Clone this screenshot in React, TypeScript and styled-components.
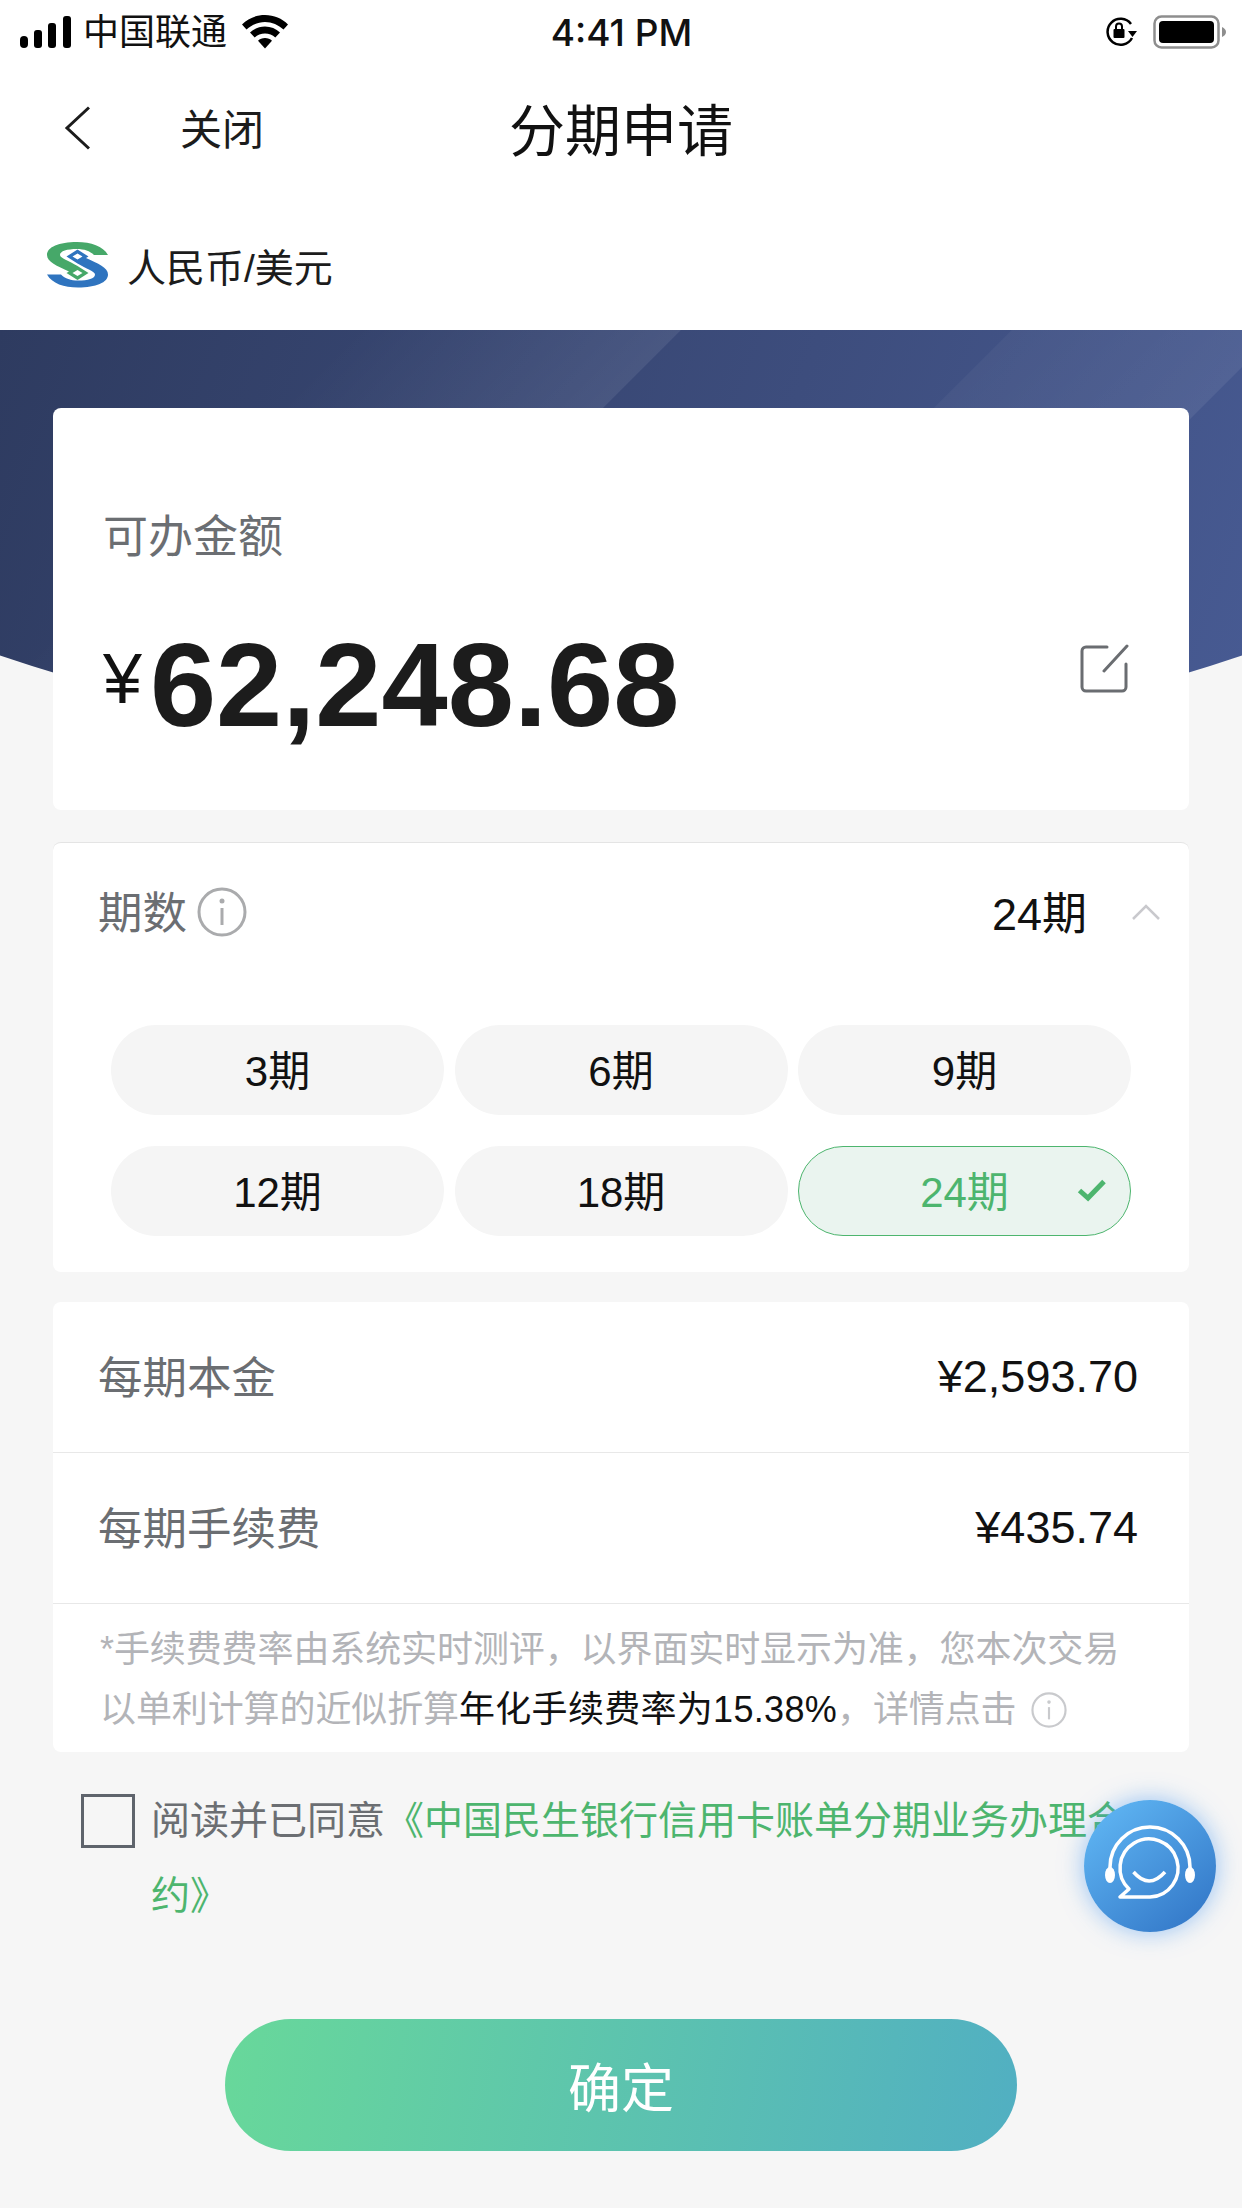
import styled, { createGlobalStyle } from 'styled-components';

const CJK = `"Liberation Sans", "Noto Sans CJK SC", sans-serif`;
const GREEN = '#4db56e';
const PERIODS = ['3期', '6期', '9期', '12期', '18期', '24期'];

const App = () => {
  return (
    <Page>
      <GlobalStyle />
      <StatusBar>
        <StatusLeft>
          <SignalIcon />
          <Carrier>中国联通</Carrier>
          <WifiIcon />
        </StatusLeft>
        <Clock>4:41 PM</Clock>
        <StatusRight>
          <LockIcon />
          <BatteryIcon />
        </StatusRight>
      </StatusBar>

      <NavBar>
        <NavLeft>
          <BackIcon width="26" height="44" viewBox="0 0 26 44">
            <path d="M25 1.5 3 22l22 20.5" fill="none" stroke="#1c1c1c" strokeWidth="3" />
          </BackIcon>
          <CloseText>关闭</CloseText>
        </NavLeft>
        <NavTitle>分期申请</NavTitle>
        <span />
      </NavBar>

      <BankRow>
        <BankLogo />
        <BankName>人民币/美元</BankName>
      </BankRow>

      <Hero>
        <AmountCard>
          <AmountLabel>可办金额</AmountLabel>
          <AmountRow>
            <Amount>
              <Currency>¥</Currency>62,248.68
            </Amount>
            <EditIcon />
          </AmountRow>
        </AmountCard>
      </Hero>

      <Content>
        <PeriodCard>
          <PeriodHeader>
            <GrayLabel>期数</GrayLabel>
            <HeaderInfo>
              <InfoIcon size={50} color="#aaabad" />
            </HeaderInfo>
            <PeriodValue>24期</PeriodValue>
            <svg width="30" height="18" viewBox="0 0 30 18">
              <path d="M2 16 15 3l13 13" fill="none" stroke="#c9c9cd" strokeWidth="2.5" />
            </svg>
          </PeriodHeader>
          <PeriodGrid>
            {PERIODS.map((p) => (
              <PeriodPill key={p} $active={p === '24期'}>
                {p}
                {p === '24期' && (
                  <PillCheck width="30" height="24" viewBox="0 0 30 24">
                    <path d="M2.5 12.5 11 20 27 3.5" fill="none" stroke={GREEN} strokeWidth="5" />
                  </PillCheck>
                )}
              </PeriodPill>
            ))}
          </PeriodGrid>
        </PeriodCard>

        <FeeCard>
          <FeeRow>
            <GrayLabel>每期本金</GrayLabel>
            <FeeValue>¥2,593.70</FeeValue>
          </FeeRow>
          <FeeRow>
            <GrayLabel>每期手续费</GrayLabel>
            <FeeValue>¥435.74</FeeValue>
          </FeeRow>
          <NoteBox>
            <NoteLine>*手续费费率由系统实时测评，以界面实时显示为准，您本次交易</NoteLine>
            <NoteLine>
              以单利计算的近似折算<Dark>年化手续费率为15.38%</Dark>，详情点击
              <NoteInfo>
                <InfoIcon size={36} color="#c9cacd" />
              </NoteInfo>
            </NoteLine>
          </NoteBox>
        </FeeCard>

        <Agreement>
          <CheckBox />
          <AgreementText>
            阅读并已同意<AgreementLink>《中国民生银行信用卡账单分期业务办理合约》</AgreementLink>
          </AgreementText>
        </Agreement>

        <ConfirmButton>确定</ConfirmButton>
      </Content>

      <ServiceButton>
        <svg width="132" height="132" viewBox="0 0 132 132">
          <path d="M26 72V67a40 40 0 0 1 80 0v5" fill="none" stroke="#fff" strokeWidth="3.5" />
          <ellipse cx="26" cy="75" rx="5" ry="8" fill="#fff" />
          <ellipse cx="106" cy="75" rx="5" ry="8" fill="#fff" />
          <path d="M66 97H36l9-8A29 29 0 1 1 66 97Z" fill="none" stroke="#fff" strokeWidth="3.5" strokeLinejoin="round" />
          <path d="M49.5 72Q65 90 81 72" fill="none" stroke="#fff" strokeWidth="3.5" />
        </svg>
      </ServiceButton>
    </Page>
  );
};

const SignalIcon = () => (
  <svg width="52" height="32" viewBox="0 0 52 32">
    <rect x="0" y="20" width="8" height="12" rx="4" />
    <rect x="14" y="14" width="8" height="18" rx="3" />
    <rect x="28" y="7" width="8" height="25" rx="3" />
    <rect x="43" y="0" width="8" height="32" rx="3" />
  </svg>
);

const WifiIcon = () => (
  <svg width="46" height="34" viewBox="0 0 46 34">
    <path d="M23 0C14 0 6 3.500 0 9.500l4.500 5C9.500 10 16 7 23 7s13.500 3 18.500 7.500l4.500-5C40 3.500 32 0 23 0Z" />
    <path d="M23 11.500c-5.800 0-11 2.300-15 6l4.700 5c2.700-2.500 6.400-4 10.300-4s7.600 1.500 10.300 4l4.700-5c-4-3.700-9.200-6-15-6Z" />
    <path d="M23 23c-2.800 0-5.200 1-7 2.700L23 33.500l7-7.800C28.200 24 25.800 23 23 23Z" />
  </svg>
);

const LockIcon = () => (
  <svg width="34" height="30" viewBox="0 0 34 30">
    <path d="M28 21A13 13 0 1 1 27 7" fill="none" stroke="#000" strokeWidth="2.500" />
    <path d="M24 14h9l-4.500 6Z" />
    <rect x="9.500" y="12" width="11" height="9" rx="1" />
    <path d="M12 12V9.500a3 3 0 0 1 6 0V12" fill="none" stroke="#000" strokeWidth="2" />
  </svg>
);

const BatteryIcon = () => (
  <svg width="74" height="34" viewBox="0 0 74 34">
    <rect x="1.500" y="1.500" width="64" height="31" rx="7" fill="none" stroke="#8e8e8e" strokeWidth="2.500" />
    <rect x="6" y="6" width="55" height="22" rx="4" />
    <path d="M69 12c2.500 1 4 3 4 5s-1.500 4-4 5Z" fill="#8e8e8e" />
  </svg>
);

// the two halves of the bank mark are the same ribbon turned half way round
const LOGO_RIBBON =
  'M61 13H47C43 9 37 7 30 7 20 7 13 9 13 13 13 16 22 19 30.500 24L41.500 31 30.500 38 19.500 31 22 29.500C10 24 0 20 0 13 0 5 12 0 30 0 44 0 56 4 61 13ZM30.500 28 25.500 31 30.500 34 35.500 31Z';

const BankLogo = () => (
  <svg width="62" height="46" viewBox="0 0 62 46">
    <path d={LOGO_RIBBON} fill="#46a869" fillRule="evenodd" />
    <path d={LOGO_RIBBON} fill="#2f74bf" fillRule="evenodd" transform="rotate(180 30.500 22.750)" />
  </svg>
);

const EditIcon = () => (
  <EditSvg width="50" height="50" viewBox="0 0 50 50">
    <path d="M27 3H6a4 4 0 0 0-4 4v36a4 4 0 0 0 4 4h36a4 4 0 0 0 4-4V20" fill="none" stroke="#6a6d71" strokeWidth="3" strokeLinecap="round" />
    <path d="M24 27 47 2" fill="none" stroke="#6a6d71" strokeWidth="3" strokeLinecap="round" />
  </EditSvg>
);

const InfoIcon = ({ size, color }: { size: number; color: string }) => (
  <svg width={size} height={size} viewBox="0 0 50 50">
    <circle cx="25" cy="25" r="23" fill="none" stroke={color} strokeWidth="3" />
    <circle cx="25" cy="14" r="2.500" fill={color} />
    <path d="M25 21v17" fill="none" stroke={color} strokeWidth="3" />
  </svg>
);

const GlobalStyle = createGlobalStyle`
  html, body {
    margin: 0;
    padding: 0;
  }

  body {
    font-family: ${CJK};
  }
`;

const Page = styled.div`
  position: relative;
  width: 1242px;
  height: 2208px;
  overflow: hidden;
  background: #f6f6f6;
`;

const StatusBar = styled.div`
  display: grid;
  grid-template-columns: 1fr auto 1fr;
  align-items: center;
  height: 60px;
  padding: 0 15px 0 20px;
  background: #fff;
`;

const StatusLeft = styled.div`
  display: flex;
  align-items: center;
`;

const Carrier = styled.span`
  margin: 3px 15px 0 11px;
  font-size: 36px;
  line-height: 60px;
  color: #111;
`;

const Clock = styled.span`
  margin: 2px 0 0 -4px;
  font-family: Inter, "Liberation Sans", sans-serif;
  font-size: 37px;
  font-weight: 500;
  color: #111;
`;

const StatusRight = styled.div`
  display: flex;
  align-items: center;
  justify-content: flex-end;
  gap: 15px;
`;

const NavBar = styled.div`
  display: grid;
  grid-template-columns: 1fr auto 1fr;
  align-items: center;
  box-sizing: border-box;
  height: 140px;
  padding-bottom: 8px;
  background: #fff;
`;

const NavLeft = styled.div`
  display: flex;
  align-items: center;
  gap: 90px;
  padding-left: 64px;
`;

const BackIcon = styled.svg`
  margin-top: 3px;
`;

const CloseText = styled.span`
  font-size: 42px;
  color: #1c1c1c;
`;

const NavTitle = styled.h1`
  margin: 0;
  font-size: 56px;
  font-weight: 400;
  color: #111;
`;

const BankRow = styled.div`
  display: flex;
  align-items: center;
  gap: 18px;
  height: 130px;
  padding-left: 47px;
  background: #fff;
`;

const BankName = styled.span`
  font-size: 39px;
  color: #1c1c1c;
`;

const Hero = styled.div`
  position: relative;
  padding: 78px 53px 0;

  &::before {
    content: '';
    position: absolute;
    top: 0;
    left: 0;
    right: 0;
    height: 350px;
    clip-path: ellipse(1000px 432px at 621px -13px);
    background:
      linear-gradient(135deg, rgba(255, 255, 255, 0) 715px, rgba(255, 255, 255, 0.035) 716px, rgba(255, 255, 255, 0.07) 904px, rgba(255, 255, 255, 0) 905px),
      linear-gradient(135deg, rgba(255, 255, 255, 0) 250px, rgba(255, 255, 255, 0.08) 481px, rgba(255, 255, 255, 0) 482px),
      linear-gradient(110deg, #2e3b60 0%, #3d4d7d 60%, #475a92 100%);
  }
`;

const AmountCard = styled.div`
  position: relative;
  box-sizing: border-box;
  height: 402px;
  padding: 100px 50px 0;
  border-radius: 8px;
  background: #fff;
`;

const AmountLabel = styled.div`
  font-size: 45px;
  line-height: 60px;
  color: #6b6e72;
`;

const AmountRow = styled.div`
  display: flex;
  align-items: center;
  justify-content: space-between;
  margin-top: 48px;
`;

const Amount = styled.div`
  font-size: 119px;
  font-weight: 700;
  line-height: 138px;
  color: #1c1c1c;
`;

const Currency = styled.span`
  display: inline-block;
  margin-right: 8px;
  font-size: 70px;
  font-weight: 400;
  vertical-align: 23px;
  line-height: 0;
  color: #111;
`;

const EditSvg = styled.svg`
  margin: -32px 9px 0 0;
`;

const Content = styled.div`
  padding: 32px 53px 0;
`;

const PeriodCard = styled.div`
  box-sizing: border-box;
  height: 430px;
  border-top: 1px solid #e4e4e4;
  border-radius: 8px;
  background: #fff;
`;

const PeriodHeader = styled.div`
  display: flex;
  align-items: center;
  height: 138px;
  padding: 0 28px 0 45px;
`;

const GrayLabel = styled.span`
  margin-bottom: 5px;
  font-size: 44.5px;
  color: #6b6e72;
`;

const HeaderInfo = styled.span`
  display: flex;
  flex: 1;
  margin-left: 10px;
`;

const PeriodValue = styled.span`
  margin: 0 44px 3px 0;
  font-size: 45px;
  color: #111;
`;

const PeriodGrid = styled.div`
  display: grid;
  grid-template-columns: repeat(3, 333px);
  grid-auto-rows: 90px;
  gap: 31px 10.5px;
  margin-top: 44px;
  padding-left: 58px;
`;

const PeriodPill = styled.div<{ $active?: boolean }>`
  position: relative;
  display: flex;
  align-items: center;
  justify-content: center;
  box-sizing: border-box;
  padding-bottom: 5px;
  border-radius: 45px;
  border: 1px solid ${(p) => (p.$active ? GREEN : 'transparent')};
  background: ${(p) => (p.$active ? '#eaf4ef' : '#f5f5f5')};
  font-size: 42px;
  color: ${(p) => (p.$active ? GREEN : '#111')};
`;

const PillCheck = styled.svg`
  position: absolute;
  right: 23px;
  top: 31px;
`;

const FeeCard = styled.div`
  margin-top: 30px;
  border-radius: 8px;
  background: #fff;
`;

const FeeRow = styled.div`
  display: flex;
  align-items: center;
  justify-content: space-between;
  box-sizing: border-box;
  height: 151px;
  padding: 0 51px 0 45px;
  border-bottom: 1px solid #e8e8e8;
`;

const FeeValue = styled.span`
  font-size: 45px;
  color: #111;
`;

const NoteBox = styled.div`
  box-sizing: border-box;
  height: 148px;
  padding: 16px 0 0 47px;
`;

const NoteLine = styled.div`
  font-size: 36px;
  line-height: 60px;
  letter-spacing: -0.1px;
  white-space: nowrap;
  color: #b3b4b8;
`;

const Dark = styled.span`
  letter-spacing: 0.3px;
  color: #111;
`;

const NoteInfo = styled.span`
  display: inline-block;
  margin-left: 14px;
  vertical-align: -6px;
  line-height: 0;
`;

const Agreement = styled.div`
  display: flex;
  align-items: flex-start;
  gap: 16px;
  margin-top: 42px;
  padding-left: 28px;
`;

const CheckBox = styled.div`
  flex: none;
  box-sizing: border-box;
  width: 54px;
  height: 54px;
  border: 3px solid #5f646c;
`;

const AgreementText = styled.div`
  width: 990px;
  font-size: 39px;
  line-height: 75px;
  margin-top: -11px;
  color: #6b6e72;
`;

const AgreementLink = styled.span`
  color: ${GREEN};
`;

const ConfirmButton = styled.button`
  display: block;
  width: 792px;
  height: 132px;
  margin: 86px auto 0;
  border: none;
  border-radius: 66px;
  background: linear-gradient(100deg, #68d89a 0%, #51afc2 100%);
  font-family: ${CJK};
  font-size: 53px;
  color: #fff;
`;

const ServiceButton = styled.div`
  position: absolute;
  left: 1084px;
  top: 1800px;
  width: 132px;
  height: 132px;
  border-radius: 50%;
  background: linear-gradient(140deg, #63bbf7 0%, #2f72c4 100%);
  box-shadow: 0 0 24px rgba(70, 150, 240, 0.55);
`;

export default App;
